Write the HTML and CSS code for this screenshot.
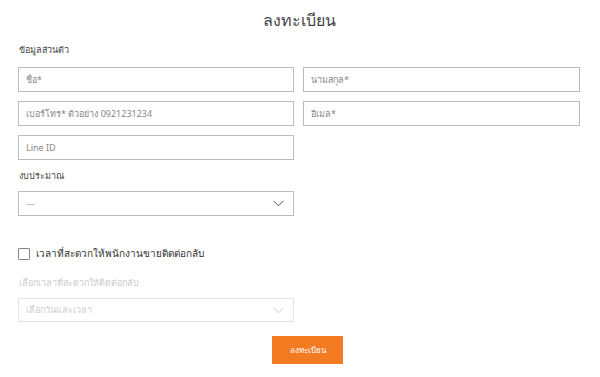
FILE: index.html
```html
<!DOCTYPE html>
<html lang="th">
<head>
    <meta charset="UTF-8">
    <meta name="viewport" content="width=device-width, initial-scale=1.0">
    <title>ลงทะเบียน</title>
    <link rel="stylesheet" href="styles.css">
</head>
<body>
    <div class="register">
        <h1 class="title">ลงทะเบียน</h1>
        <div class="section-label">ข้อมูลส่วนตัว</div>
        <div class="row">
            <input class="field" type="text" placeholder="ชื่อ*">
            <input class="field" type="text" placeholder="นามสกุล*">
        </div>
        <div class="row">
            <input class="field" type="text" placeholder="เบอร์โทร* ตัวอย่าง 0921231234">
            <input class="field" type="text" placeholder="อีเมล*">
        </div>
        <div class="row">
            <input class="field" type="text" placeholder="Line ID">
            <div></div>
        </div>
        <div class="section-label budget">งบประมาณ</div>
        <div class="row">
            <div class="select">
                <span>---</span>
                <svg width="11" height="7" viewBox="0 0 11 7"><path d="M0.5 0.8 L5.5 5.8 L10.5 0.8" fill="none" stroke="#555" stroke-width="1"/></svg>
            </div>
            <div></div>
        </div>
        <label class="check">
            <span class="box"></span>
            <span>เวลาที่สะดวกให้พนักงานขายติดต่อกลับ</span>
        </label>
        <div class="section-label muted">เลือกเวลาที่สะดวกให้ติดต่อกลับ</div>
        <div class="row">
            <div class="select disabled">
                <span>เลือกวันและเวลา</span>
                <svg width="11" height="7" viewBox="0 0 11 7"><path d="M0.5 0.8 L5.5 5.8 L10.5 0.8" fill="none" stroke="#ccc" stroke-width="1"/></svg>
            </div>
            <div></div>
        </div>
        <div class="actions">
            <button class="submit">ลงทะเบียน</button>
        </div>
    </div>
</body>
</html>
```

FILE: styles.css
```css
body {
    margin: 0;
    font-family: "Noto Sans", "DejaVu Sans", sans-serif;
    background: #fff;
    color: #333;
}
.register {
    padding: 8px 20px 0 18px;
}
.title {
    margin: 0;
    text-align: center;
    font-size: 16px;
    font-weight: normal;
    line-height: 24px;
    color: #444;
}
.section-label {
    font-size: 9px;
    line-height: 14px;
    margin: 11px 0 10px 1px;
    color: #444;
}
.section-label.budget {
    margin: 9px 0 8px 1px;
}
.section-label.muted {
    color: #ccc;
    margin: 15px 0 8px 1px;
}
.row {
    display: grid;
    grid-template-columns: 276px 277px;
    gap: 9px;
    margin-bottom: 9px;
}
.field {
    box-sizing: border-box;
    height: 25px;
    border: 1px solid #bbb;
    padding: 0 7px;
    font-family: inherit;
    font-size: 9px;
    color: #333;
    outline: none;
}
.field::placeholder {
    color: #888;
}
.select {
    box-sizing: border-box;
    height: 25px;
    border: 1px solid #bbb;
    padding: 0 9px 0 7px;
    display: flex;
    align-items: center;
    justify-content: space-between;
    font-size: 9px;
    color: #999;
}
.select.disabled {
    height: 24px;
    border-color: #e4e4e4;
    color: #ccc;
}
.check {
    display: flex;
    align-items: center;
    gap: 6px;
    margin-top: 30px;
    font-size: 10px;
    color: #333;
}
.box {
    box-sizing: border-box;
    width: 12px;
    height: 12px;
    border: 1px solid #888;
    border-radius: 1px;
}
.actions {
    display: flex;
    justify-content: center;
    padding-left: 17px;
    margin-top: 14px;
}
.submit {
    width: 71px;
    height: 28px;
    border: none;
    background: #f27a21;
    color: #fff;
    font-family: inherit;
    font-size: 8px;
}
```
